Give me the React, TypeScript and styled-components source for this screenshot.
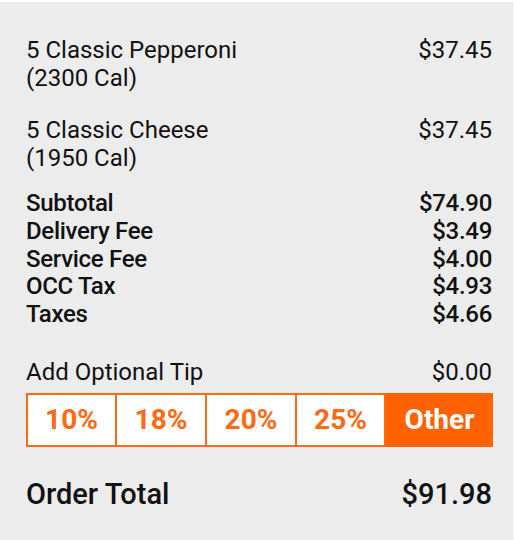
import styled, { createGlobalStyle } from "styled-components";

const GlobalStyle = createGlobalStyle`
  body {
    margin: 0;
    background: #ffffff;
    font-family: Roboto, "Liberation Sans", sans-serif;
    color: #111111;
  }
`;

const Panel = styled.section`
  box-sizing: border-box;
  width: 513px;
  height: 538px;
  margin-top: 2px;
  background: #ececec;
  padding: 34px 21px 0 26px;
`;

const Item = styled.div`
  display: flex;
  justify-content: space-between;
  font-size: 24px;
  line-height: 28px;
  margin-bottom: 24px;

  &:nth-of-type(2) {
    margin-bottom: 18px;
  }
`;

const Summary = styled.div`
  display: flex;
  flex-direction: column;
  margin-bottom: 29px;
`;

const Line = styled.div`
  display: flex;
  justify-content: space-between;
  font-size: 24px;
  font-weight: 500;
  line-height: 27.8px;
  letter-spacing: -0.3px;
`;

const TipLabel = styled(Line)`
  font-weight: 400;
  line-height: 28px;
  letter-spacing: 0;
  margin-bottom: 7px;
`;

const TipBar = styled.div`
  display: grid;
  grid-template-columns: 89px 90px 90px 89px 1fr;
  width: 467px;
  height: 54px;
  box-sizing: border-box;
  border: 2px solid #ff6a13;
  background: #ffffff;
  margin-bottom: 30px;
`;

const TipButton = styled.button<{ $active?: boolean }>`
  border: none;
  border-right: ${(p) => (p.$active ? "none" : "2px solid #ff6a13")};
  background: ${(p) => (p.$active ? "#ff6200" : "#ffffff")};
  color: ${(p) => (p.$active ? "#ffffff" : "#ff6a13")};
  font-family: Roboto, "Liberation Sans", sans-serif;
  font-size: 28px;
  font-weight: 700;
  padding: 0;
  margin: ${(p) => (p.$active ? "-2px -2px -2px 0" : "0")};
  cursor: pointer;
`;

const Total = styled.div`
  display: flex;
  justify-content: space-between;
  font-size: 29px;
  font-weight: 500;
  line-height: 34px;
`;

const items = [
  { name: "5 Classic Pepperoni", cal: "(2300 Cal)", price: "$37.45" },
  { name: "5 Classic Cheese", cal: "(1950 Cal)", price: "$37.45" },
];

const lines = [
  ["Subtotal", "$74.90"],
  ["Delivery Fee", "$3.49"],
  ["Service Fee", "$4.00"],
  ["OCC Tax", "$4.93"],
  ["Taxes", "$4.66"],
];

const tips = ["10%", "18%", "20%", "25%"];

export default function App() {
  return (
    <>
      <GlobalStyle />
      <Panel>
        {items.map((item) => (
          <Item key={item.name}>
            <div>
              {item.name}
              <br />
              {item.cal}
            </div>
            <div>{item.price}</div>
          </Item>
        ))}

        <Summary>
          {lines.map(([label, value]) => (
            <Line key={label}>
              <span>{label}</span>
              <span>{value}</span>
            </Line>
          ))}
        </Summary>

        <TipLabel>
          <span>Add Optional Tip</span>
          <span>$0.00</span>
        </TipLabel>
        <TipBar>
          {tips.map((t) => (
            <TipButton key={t}>{t}</TipButton>
          ))}
          <TipButton $active>Other</TipButton>
        </TipBar>

        <Total>
          <span>Order Total</span>
          <span>$91.98</span>
        </Total>
      </Panel>
    </>
  );
}
